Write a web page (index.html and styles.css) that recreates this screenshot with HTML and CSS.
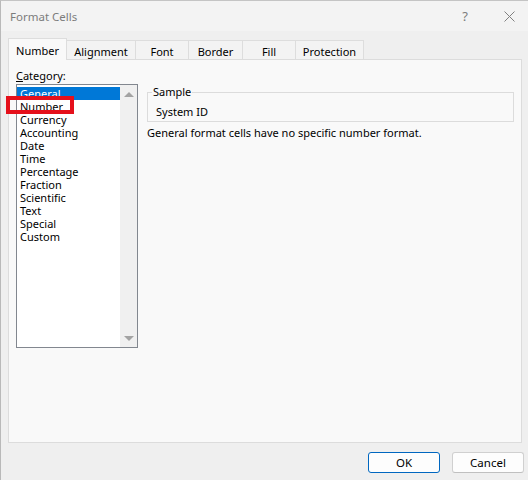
FILE: index.html
```html
<!DOCTYPE html>
<html lang="en">
<head>
    <meta charset="UTF-8">
    <meta name="viewport" content="width=device-width, initial-scale=1.0">
    <title>Format Cells</title>
    <link rel="stylesheet" href="styles.css">
</head>
<body>
    <div class="window">
        <div class="titlebar">
            <span class="title">Format Cells</span>
            <span class="help">?</span>
            <svg class="close" width="11" height="11" viewBox="0 0 11 11">
                <path d="M0.5 0.5 L10.5 10.5 M10.5 0.5 L0.5 10.5" stroke="#808080" stroke-width="1" fill="none"/>
            </svg>
        </div>

        <div class="tabs">
            <div class="tab tab--active">Number</div>
            <div class="tab tab--align">Alignment</div>
            <div class="tab tab--font">Font</div>
            <div class="tab tab--border">Border</div>
            <div class="tab tab--fill">Fill</div>
            <div class="tab tab--prot">Protection</div>
        </div>

        <div class="panel">
            <div class="category">
                <div class="label"><u>C</u>ategory:</div>
                <div class="listbox">
                    <ul class="list">
                        <li class="selected">General</li>
                        <li>Number</li>
                        <li>Currency</li>
                        <li>Accounting</li>
                        <li>Date</li>
                        <li>Time</li>
                        <li>Percentage</li>
                        <li>Fraction</li>
                        <li>Scientific</li>
                        <li>Text</li>
                        <li>Special</li>
                        <li>Custom</li>
                    </ul>
                    <div class="scrollbar">
                        <span class="arrow arrow--up"></span>
                        <span class="arrow arrow--down"></span>
                    </div>
                </div>
            </div>
            <div class="details">
                <fieldset class="sample">
                    <legend>Sample</legend>
                    <div class="sample__value">System ID</div>
                </fieldset>
                <p class="hint">General format cells have no specific number format.</p>
            </div>
        </div>

        <div class="buttons">
            <button class="btn btn--default">OK</button>
            <button class="btn">Cancel</button>
        </div>

        <!-- marker round the Number entry -->
        <div class="marker"></div>
    </div>
</body>
</html>
```

FILE: styles.css
```css
* {
    margin: 0px;
    padding: 0px;
    box-sizing: border-box;
}

body {
    width: 528px;
    height: 480px;
    overflow: hidden;
    font-family: "Noto Sans", "Open Sans", sans-serif;
    font-size: 11px;
    color: #000;
}

.window {
    width: 528px;
    height: 480px;
    background-color: #efefef;
    border-left: 1px solid #b9b9b9;
    border-top: 1px solid #c4c4c4;
    position: relative;
}

.titlebar {
    height: 30px;
    background-color: #f3f3f3;
    display: flex;
    align-items: center;
    padding-left: 9px;
    color: #7c7c7c;
}
.title {
    font-size: 11.5px;
    flex: 1;
}
.help {
    font-size: 13px;
    margin-right: 36px;
}
.close {
    margin-right: 13px;
}

.tabs {
    display: flex;
    align-items: flex-end;
    height: 28px;
    padding-left: 7px;
}
.tab {
    height: 19px;
    padding-top: 3px;
    line-height: 16px;
    text-align: center;
    background-color: #f3f3f3;
    border: 1px solid #dddddd;
    border-left: none;
    border-bottom: none;
}
.tab--active {
    width: 59px;
    height: 22px;
    padding-top: 4px;
    margin-bottom: -1px;
    background-color: #f9f9f9;
    border-left: 1px solid #dddddd;
    position: relative;
}
.tab--align { width: 69px; }
.tab--font { width: 53px; }
.tab--border { width: 54px; }
.tab--fill { width: 53px; }
.tab--prot { width: 68px; }

.panel {
    margin-left: 7px;
    width: 514px;
    height: 384px;
    background-color: #f9f9f9;
    border: 1px solid #dcdcdc;
    padding: 8px 0px 0px 7px;
    display: flex;
    gap: 9px;
}

.label {
    height: 16px;
    line-height: 15px;
}
.listbox {
    width: 122px;
    height: 264px;
    border: 1px solid #82878f;
    background-color: #fff;
    display: flex;
}
.list {
    list-style: none;
    flex: 1;
    padding-top: 2px;
}
.list li {
    height: 13px;
    line-height: 13px;
    padding-left: 3px;
}
.list li.selected {
    background-color: #0078d7;
    color: #fff;
}
.scrollbar {
    width: 17px;
    background-color: #f0f0f0;
    display: flex;
    flex-direction: column;
    justify-content: space-between;
    align-items: center;
    padding: 7px 0px 6px;
}
.arrow {
    width: 0px;
    height: 0px;
    border-left: 5px solid transparent;
    border-right: 5px solid transparent;
}
.arrow--up {
    border-bottom: 5px solid #a3a3a3;
}
.arrow--down {
    border-top: 5px solid #a3a3a3;
}

.details {
    width: 367px;
    padding-top: 16px;
}
.sample {
    border: 1px solid #dcdcdc;
    padding: 0px 4px 1px;
}
.sample legend {
    padding: 0px 1px;
    line-height: 16px;
}
.sample__value {
    padding-left: 4px;
    line-height: 16px;
    margin-top: 4px;
}
.hint {
    margin-top: 3px;
    line-height: 16px;
}

.buttons {
    display: flex;
    justify-content: flex-end;
    gap: 12px;
    padding: 9px 4px 0px 0px;
}
.btn {
    width: 72px;
    height: 21px;
    font-family: inherit;
    font-size: 11.5px;
    background-color: #fdfdfd;
    border: 1px solid #d0d0d0;
    border-bottom-color: #c0c0c0;
    border-radius: 3px;
}
.btn--default {
    border: 1px solid #0067c0;
}

.marker {
    position: absolute;
    left: 5px;
    top: 95px;
    width: 68px;
    height: 18px;
    border: 4px solid #e5101b;
}
```
